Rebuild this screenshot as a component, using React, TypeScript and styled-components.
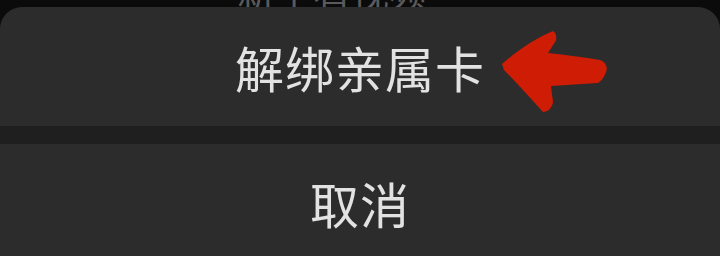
import React from "react";
import styled, { createGlobalStyle } from "styled-components";

const Global = createGlobalStyle`
  html, body { margin: 0; padding: 0; background: #0b0b0b; }
  body { font-family: "Noto Sans CJK SC", "Noto Sans", sans-serif; }
`;

const Page = styled.div`
  position: relative;
  width: 720px;
  height: 256px;
  overflow: hidden;
  background: #0b0b0b;
  display: flex;
  flex-direction: column;
`;

const Backdrop = styled.div`
  height: 7px;
  flex-shrink: 0;
  overflow: hidden;
  display: flex;
  justify-content: center;
  align-items: flex-end;
`;

const BackdropText = styled.div`
  font-size: 38px;
  line-height: 38px;
  color: #5a5a5a;
  margin-bottom: -3px;
  margin-left: -56px;
  white-space: nowrap;
`;

const Sheet = styled.div`
  flex: 1;
  min-height: 0;
  overflow: hidden;
  background: #2c2c2c;
  border-radius: 22px 22px 0 0;
  display: flex;
  flex-direction: column;
`;

const ActionItem = styled.div<{ $h: number; $pt: number }>`
  height: ${(p) => p.$h}px;
  flex-shrink: 0;
  box-sizing: border-box;
  padding-top: ${(p) => p.$pt}px;
  display: flex;
  justify-content: center;
  align-items: center;
  font-size: 49px;
  letter-spacing: 1px;
  color: #e2e2e2;
`;

const Separator = styled.div`
  height: 18px;
  flex-shrink: 0;
  background: #1f1f1f;
`;

const Arrow = styled.svg`
  position: absolute;
  left: 498px;
  top: 28px;
  width: 114px;
  height: 88px;
`;

export default function App() {
  return (
    <>
      <Global />
      <Page>
        <Backdrop>
          <BackdropText>新手看视频</BackdropText>
        </Backdrop>
        <Sheet>
          <ActionItem $h={119} $pt={0}>解绑亲属卡</ActionItem>
          <Separator />
          <ActionItem $h={116} $pt={0}>取消</ActionItem>
        </Sheet>
        <Arrow viewBox="498 28 114 88">
          <path
            d="M502 64 C518 50 536 38 553 31 C557 33 557 40 555 42 L548 53 C566 55 584 57 600 60 C606 62 608 68 606 72 C604 78 601 81 598 83 C582 84 566 85 551 86 L553 102 C552 108 548 112 543 112 C530 98 516 82 504 70 Z"
            fill="#cf1c04"
          />
        </Arrow>
      </Page>
    </>
  );
}
